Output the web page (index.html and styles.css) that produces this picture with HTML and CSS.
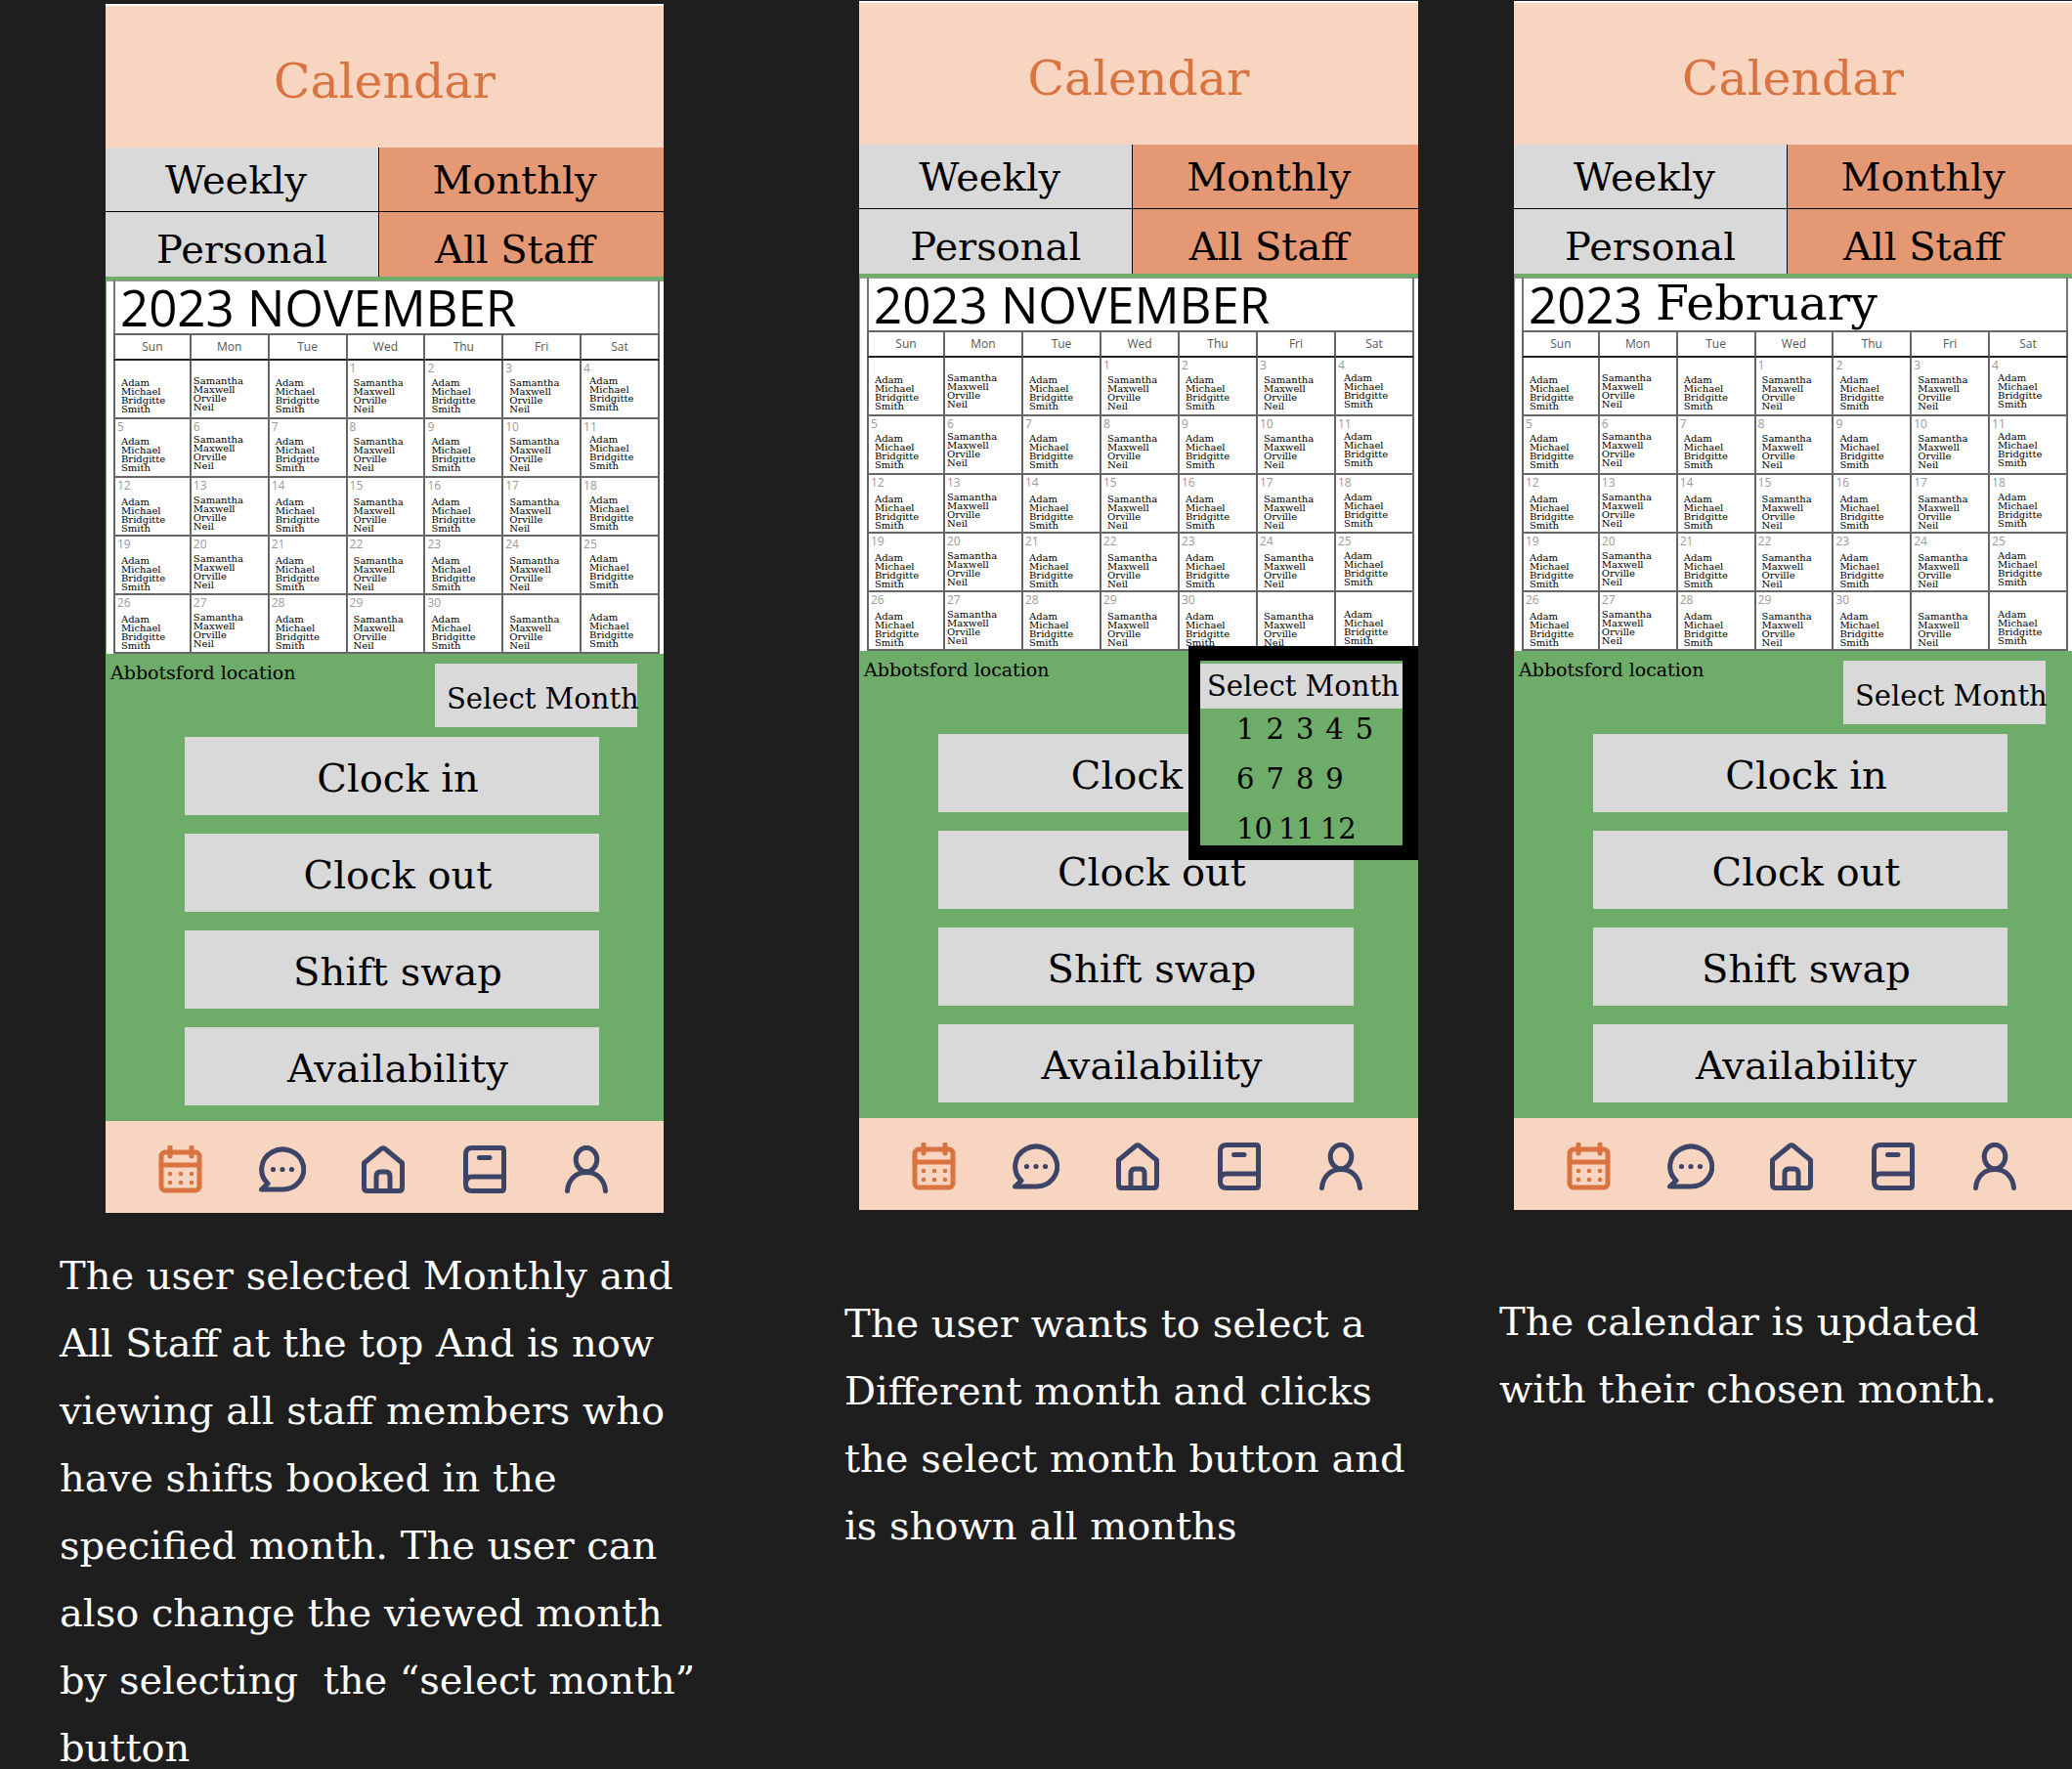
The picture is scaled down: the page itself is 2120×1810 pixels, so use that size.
FILE: index.html
```html
<!DOCTYPE html>
<html lang="en">
<head>
<meta charset="utf-8">
<title>Calendar – select month flow</title>
<link rel="stylesheet" href="styles.css">
</head>
<body>
<svg class="sprite" aria-hidden="true">
  <symbol id="i-calendar" viewBox="0 0 48 49">
    <rect x="4" y="7" width="39" height="39" rx="4"/>
    <path d="M4 20H43M13 2V11M35 2V11"/>
    <g class="dots"><circle cx="13" cy="29" r="2.3"/><circle cx="24" cy="29" r="2.3"/><circle cx="35" cy="29" r="2.3"/><circle cx="13" cy="38" r="2.3"/><circle cx="24" cy="38" r="2.3"/><circle cx="35" cy="38" r="2.3"/></g>
  </symbol>
  <symbol id="i-chat" viewBox="0 0 48 49">
    <path d="M24 45H2.5L9 39A21.5 20.5 0 1 1 24 45Z"/>
    <g class="dots"><circle cx="14.5" cy="24.5" r="2.6"/><circle cx="24" cy="24.5" r="2.6"/><circle cx="33.5" cy="24.5" r="2.6"/></g>
  </symbol>
  <symbol id="i-home" viewBox="0 0 48 49">
    <path d="M4.500 18L22 3.500Q24 2 26 3.500L43.500 18V43Q43.500 46.500 40 46.500H8Q4.500 46.500 4.500 43Z"/>
    <path d="M17 46V32Q17 27 21 27H27Q31 27 31 32V46"/>
  </symbol>
  <symbol id="i-book" viewBox="0 0 48 49">
    <path d="M11 2.500H41Q43.500 2.500 43.500 5V44Q43.500 46.500 41 46.500H11Q4.500 46.500 4.500 40V9Q4.500 2.500 11 2.500Z"/>
    <path d="M4.500 39Q4.500 32 11 32H43M18.500 12.500H29"/>
  </symbol>
  <symbol id="i-user" viewBox="0 0 48 49">
    <ellipse cx="24" cy="14.500" rx="10.800" ry="12.200"/>
    <path d="M4.500 46.500C5.500 35 13 27.500 24 27.500S42.500 35 43.500 46.500"/>
  </symbol>
</svg>

<main class="board">
  <section class="step step-first">
    <div class="screen">
      <h1 class="screen-title">Calendar</h1>
      <div class="tabs">
        <button class="tab">Weekly</button><button class="tab on">Monthly</button>
        <button class="tab">Personal</button><button class="tab on">All Staff</button>
      </div>
      <table class="cal"><caption>2023 NOVEMBER</caption></table>
      <div class="tools">
        <span class="place">Abbotsford location</span>
        <button class="select-month">Select Month</button>
      </div>
      <div class="actions">
        <button>Clock in</button><button>Clock out</button><button>Shift swap</button><button>Availability</button>
      </div>
      <nav class="nav">
        <a class="active" href="#calendar" aria-label="Calendar"><svg><use href="#i-calendar"/></svg></a>
        <a href="#chat" aria-label="Messages"><svg><use href="#i-chat"/></svg></a>
        <a href="#home" aria-label="Home"><svg><use href="#i-home"/></svg></a>
        <a href="#book" aria-label="Handbook"><svg><use href="#i-book"/></svg></a>
        <a href="#user" aria-label="Profile"><svg><use href="#i-user"/></svg></a>
      </nav>
    </div>
    <p class="note">The user selected Monthly and<br>All Staff at the top And is now<br>viewing all staff members who<br>have shifts booked in the<br>specified month. The user can<br>also change the viewed month<br>by selecting&nbsp; the “select month”<br>button</p>
  </section>

  <section class="step step-second">
    <div class="screen">
      <h1 class="screen-title">Calendar</h1>
      <div class="tabs">
        <button class="tab">Weekly</button><button class="tab on">Monthly</button>
        <button class="tab">Personal</button><button class="tab on">All Staff</button>
      </div>
      <table class="cal"><caption>2023 NOVEMBER</caption></table>
      <div class="tools">
        <span class="place">Abbotsford location</span>
        <div class="month-menu">
          <button class="month-head">Select Month</button>
          <div class="month-row"><button>1</button><button>2</button><button>3</button><button>4</button><button>5</button></div>
          <div class="month-row"><button>6</button><button>7</button><button>8</button><button>9</button></div>
          <div class="month-row tight"><button>10</button><button>11</button><button>12</button></div>
        </div>
      </div>
      <div class="actions">
        <button>Clock in</button><button>Clock out</button><button>Shift swap</button><button>Availability</button>
      </div>
      <nav class="nav">
        <a class="active" href="#calendar" aria-label="Calendar"><svg><use href="#i-calendar"/></svg></a>
        <a href="#chat" aria-label="Messages"><svg><use href="#i-chat"/></svg></a>
        <a href="#home" aria-label="Home"><svg><use href="#i-home"/></svg></a>
        <a href="#book" aria-label="Handbook"><svg><use href="#i-book"/></svg></a>
        <a href="#user" aria-label="Profile"><svg><use href="#i-user"/></svg></a>
      </nav>
    </div>
    <p class="note">The user wants to select a<br>Different month and clicks<br>the select month button and<br>is shown all months</p>
  </section>

  <section class="step step-third">
    <div class="screen">
      <h1 class="screen-title">Calendar</h1>
      <div class="tabs">
        <button class="tab">Weekly</button><button class="tab on">Monthly</button>
        <button class="tab">Personal</button><button class="tab on">All Staff</button>
      </div>
      <table class="cal"><caption>2023 <span class="picked">February</span></caption></table>
      <div class="tools">
        <span class="place">Abbotsford location</span>
        <button class="select-month">Select Month</button>
      </div>
      <div class="actions">
        <button>Clock in</button><button>Clock out</button><button>Shift swap</button><button>Availability</button>
      </div>
      <nav class="nav">
        <a class="active" href="#calendar" aria-label="Calendar"><svg><use href="#i-calendar"/></svg></a>
        <a href="#chat" aria-label="Messages"><svg><use href="#i-chat"/></svg></a>
        <a href="#home" aria-label="Home"><svg><use href="#i-home"/></svg></a>
        <a href="#book" aria-label="Handbook"><svg><use href="#i-book"/></svg></a>
        <a href="#user" aria-label="Profile"><svg><use href="#i-user"/></svg></a>
      </nav>
    </div>
    <p class="note">The calendar is updated<br>with their chosen month.</p>
  </section>
</main>
<script src="calendar.js"></script>
</body>
</html>
```
FILE: styles.css
```css
* { box-sizing: border-box; }

:root {
  --ink: #000;
  --peach: #f8d5c0;
  --orange: #e49873;
  --rust: #d97340;
  --grey: #d9d9d9;
  --green: #6eac6a;
  --navy: #3c4468;
  --slab: "DejaVu Serif", "Liberation Serif", serif;
  --sans: "Open Sans", "Noto Sans", sans-serif;
}

body {
  margin: 0;
  min-height: 100vh;
  background: #1e1e1e;
  color: var(--ink);
  font-family: var(--slab);
}

button {
  margin: 0;
  padding: 0;
  border: 0;
  background: none;
  color: inherit;
  font: inherit;
  white-space: nowrap;
}

.sprite { display: none; }

.board {
  display: grid;
  grid-template-columns: 840fr 671fr 609fr;
  align-items: start;
}

.step { min-width: 0; }
.step-first { padding-top: 4px; }
.step-second, .step-third { padding-top: 1px; }

.screen {
  background: var(--green);
  border-top: 2px solid #fff;
}
.step-first .screen { margin: 0 161px 0 108px; }
.step-second .screen { margin: 0 60px 0 39px; }
.step-third .screen { margin-left: 38px; }

.screen-title {
  margin: 0;
  padding-top: 11px;
  height: 145px;
  line-height: 134px;
  background: var(--peach);
  color: var(--rust);
  font-size: 49px;
  font-weight: 400;
  text-align: center;
}

.tabs {
  display: grid;
  grid-template-columns: 280fr 291fr;
  grid-template-rows: 65px 67px;
  height: 136px;
}
.tab {
  background: var(--grey);
  font-size: 40px;
  line-height: 56px;
}
.tab:first-child { padding-right: 12px; }
.tab:nth-child(odd) { border-right: 1px solid var(--ink); }
.tab:nth-child(n+3) {
  border-top: 1px solid var(--ink);
  padding-top: 10px;
}
.tab.on { background: var(--orange); padding-right: 14px; }

.cal {
  width: calc(100% - 1px);
  margin-left: 1px;
  padding: 0 4px 0 7px;
  background: #fff;
  border-spacing: 0;
  table-layout: fixed;
  border-collapse: separate;
}
/* The side rules of the grid run on up both sides of the month title. */
.cal caption {
  padding: 2px 0 0 14px;
  height: 54px;
  background:
    linear-gradient(#777, #777) 7px 0 / 2px 100% no-repeat,
    linear-gradient(#777, #777) right 4px top 0 / 2px 100% no-repeat,
    linear-gradient(#999, #999) 0 0 / 100% 1px no-repeat,
    #fff;
  font-family: var(--sans);
  font-size: 51px;
  line-height: 50px;
  text-align: left;
  white-space: nowrap;
}
.cal .picked {
  font-family: var(--slab);
  font-size: 49px;
  line-height: 40px;
  vertical-align: 4px;
}
.cal th, .cal td {
  padding: 0;
  border-right: 2px solid #666;
  overflow: hidden;
}
.cal th:first-child, .cal td:first-child { border-left: 2px solid #666; }
.cal th {
  height: 28px;
  border-top: 2px solid #666;
  border-bottom: 2px solid #222;
  color: #555;
  font: 12px/24px var(--sans);
}
.cal td {
  height: 60px;
  border-bottom: 2px solid #666;
  vertical-align: top;
}
.day {
  display: block;
  height: 16px;
  padding-left: 2px;
  color: #999;
  font: 12px/16px var(--sans);
}
.cal ul {
  height: 42px;
  margin: 0;
  padding: 2px 0 0 6px;
  list-style: none;
  font-size: 10px;
  line-height: 9px;
}
.cal td:nth-child(2) ul { padding-left: 2px; padding-top: 0; }
.cal td:nth-child(7) ul { padding-left: 8px; padding-top: 0; }
.cal tr:nth-child(n+3) ul { padding-top: 4px; }
.cal tr:nth-child(n+3) td:nth-child(2) ul,
.cal tr:nth-child(n+3) td:nth-child(7) ul { padding-top: 2px; }

.tools {
  position: relative;
  display: flex;
  justify-content: space-between;
  height: 85px;
  padding: 10px 27px 0 5px;
}
.place { font-size: 19px; line-height: 18px; white-space: nowrap; }
.select-month {
  width: 207px;
  height: 65px;
  padding: 6px 0 0 12px;
  background: var(--grey);
  font-size: 29px;
  text-align: left;
}

.month-menu {
  position: absolute;
  top: -5px;
  right: 0;
  width: 235px;
  border: solid #000;
  border-width: 15px 16px 15px 12px;
  background: var(--green);
  font-size: 29px;
}
.month-head {
  display: block;
  width: 100%;
  height: 46px;
  margin-top: 3px;
  padding-left: 7px;
  background: var(--grey);
  text-align: left;
}
.month-row {
  display: flex;
  gap: 12px;
  height: 51px;
  padding-left: 37px;
  line-height: 42px;
}
.month-row button { height: 42px; }
.month-row.tight { gap: 6px; height: 38px; }

.actions {
  display: grid;
  gap: 19px;
  padding: 0 66px 16px 81px;
}
.actions button {
  height: 80px;
  padding: 4px 0 0 12px;
  background: var(--grey);
  font-size: 40px;
}

.nav {
  display: grid;
  grid-template-columns: repeat(5, 1fr);
  align-items: center;
  justify-items: center;
  height: 94px;
  padding: 4px 27px 0 25px;
  background: var(--peach);
}
.nav a { display: flex; color: var(--navy); }
.nav a.active { color: var(--rust); }
.nav svg {
  width: 48px;
  height: 49px;
  fill: none;
  stroke: currentColor;
  stroke-width: 5;
  stroke-linecap: round;
  stroke-linejoin: round;
}
.dots { fill: currentColor; stroke: none; }

.note {
  margin: 30px 0 -16px 61px;
  color: #fff;
  font-size: 40px;
  line-height: 69px;
  white-space: nowrap;
}
.step-second .note { margin: 82px 0 0 24px; }
.step-third .note { margin: 80px 0 0 23px; }
```
FILE: calendar.js
```js
// Fills every month table with its weekday header and five weeks of shifts.
const weekdays = ["Sun", "Mon", "Tue", "Wed", "Thu", "Fri", "Sat"];
const teamA = ["Adam", "Michael", "Bridgitte", "Smith"];
const teamB = ["Samantha", "Maxwell", "Orville", "Neil"];
const rota = [teamA, teamB, teamA, teamB, teamA, teamB, teamA];
const firstWeekday = 3;
const daysInMonth = 30;

const head = "<thead><tr>" + weekdays.map(d => `<th scope="col">${d}</th>`).join("") + "</tr></thead>";

let body = "<tbody>";
for (let week = 0; week < 5; week++) {
  body += "<tr>";
  for (let col = 0; col < 7; col++) {
    const day = week * 7 + col - firstWeekday + 1;
    const label = day >= 1 && day <= daysInMonth ? day : "";
    const names = rota[col].map(n => `<li>${n}</li>`).join("");
    body += `<td><span class="day">${label}</span><ul>${names}</ul></td>`;
  }
  body += "</tr>";
}
body += "</tbody>";

document.querySelectorAll(".cal").forEach(t => t.insertAdjacentHTML("beforeend", head + body));
```
